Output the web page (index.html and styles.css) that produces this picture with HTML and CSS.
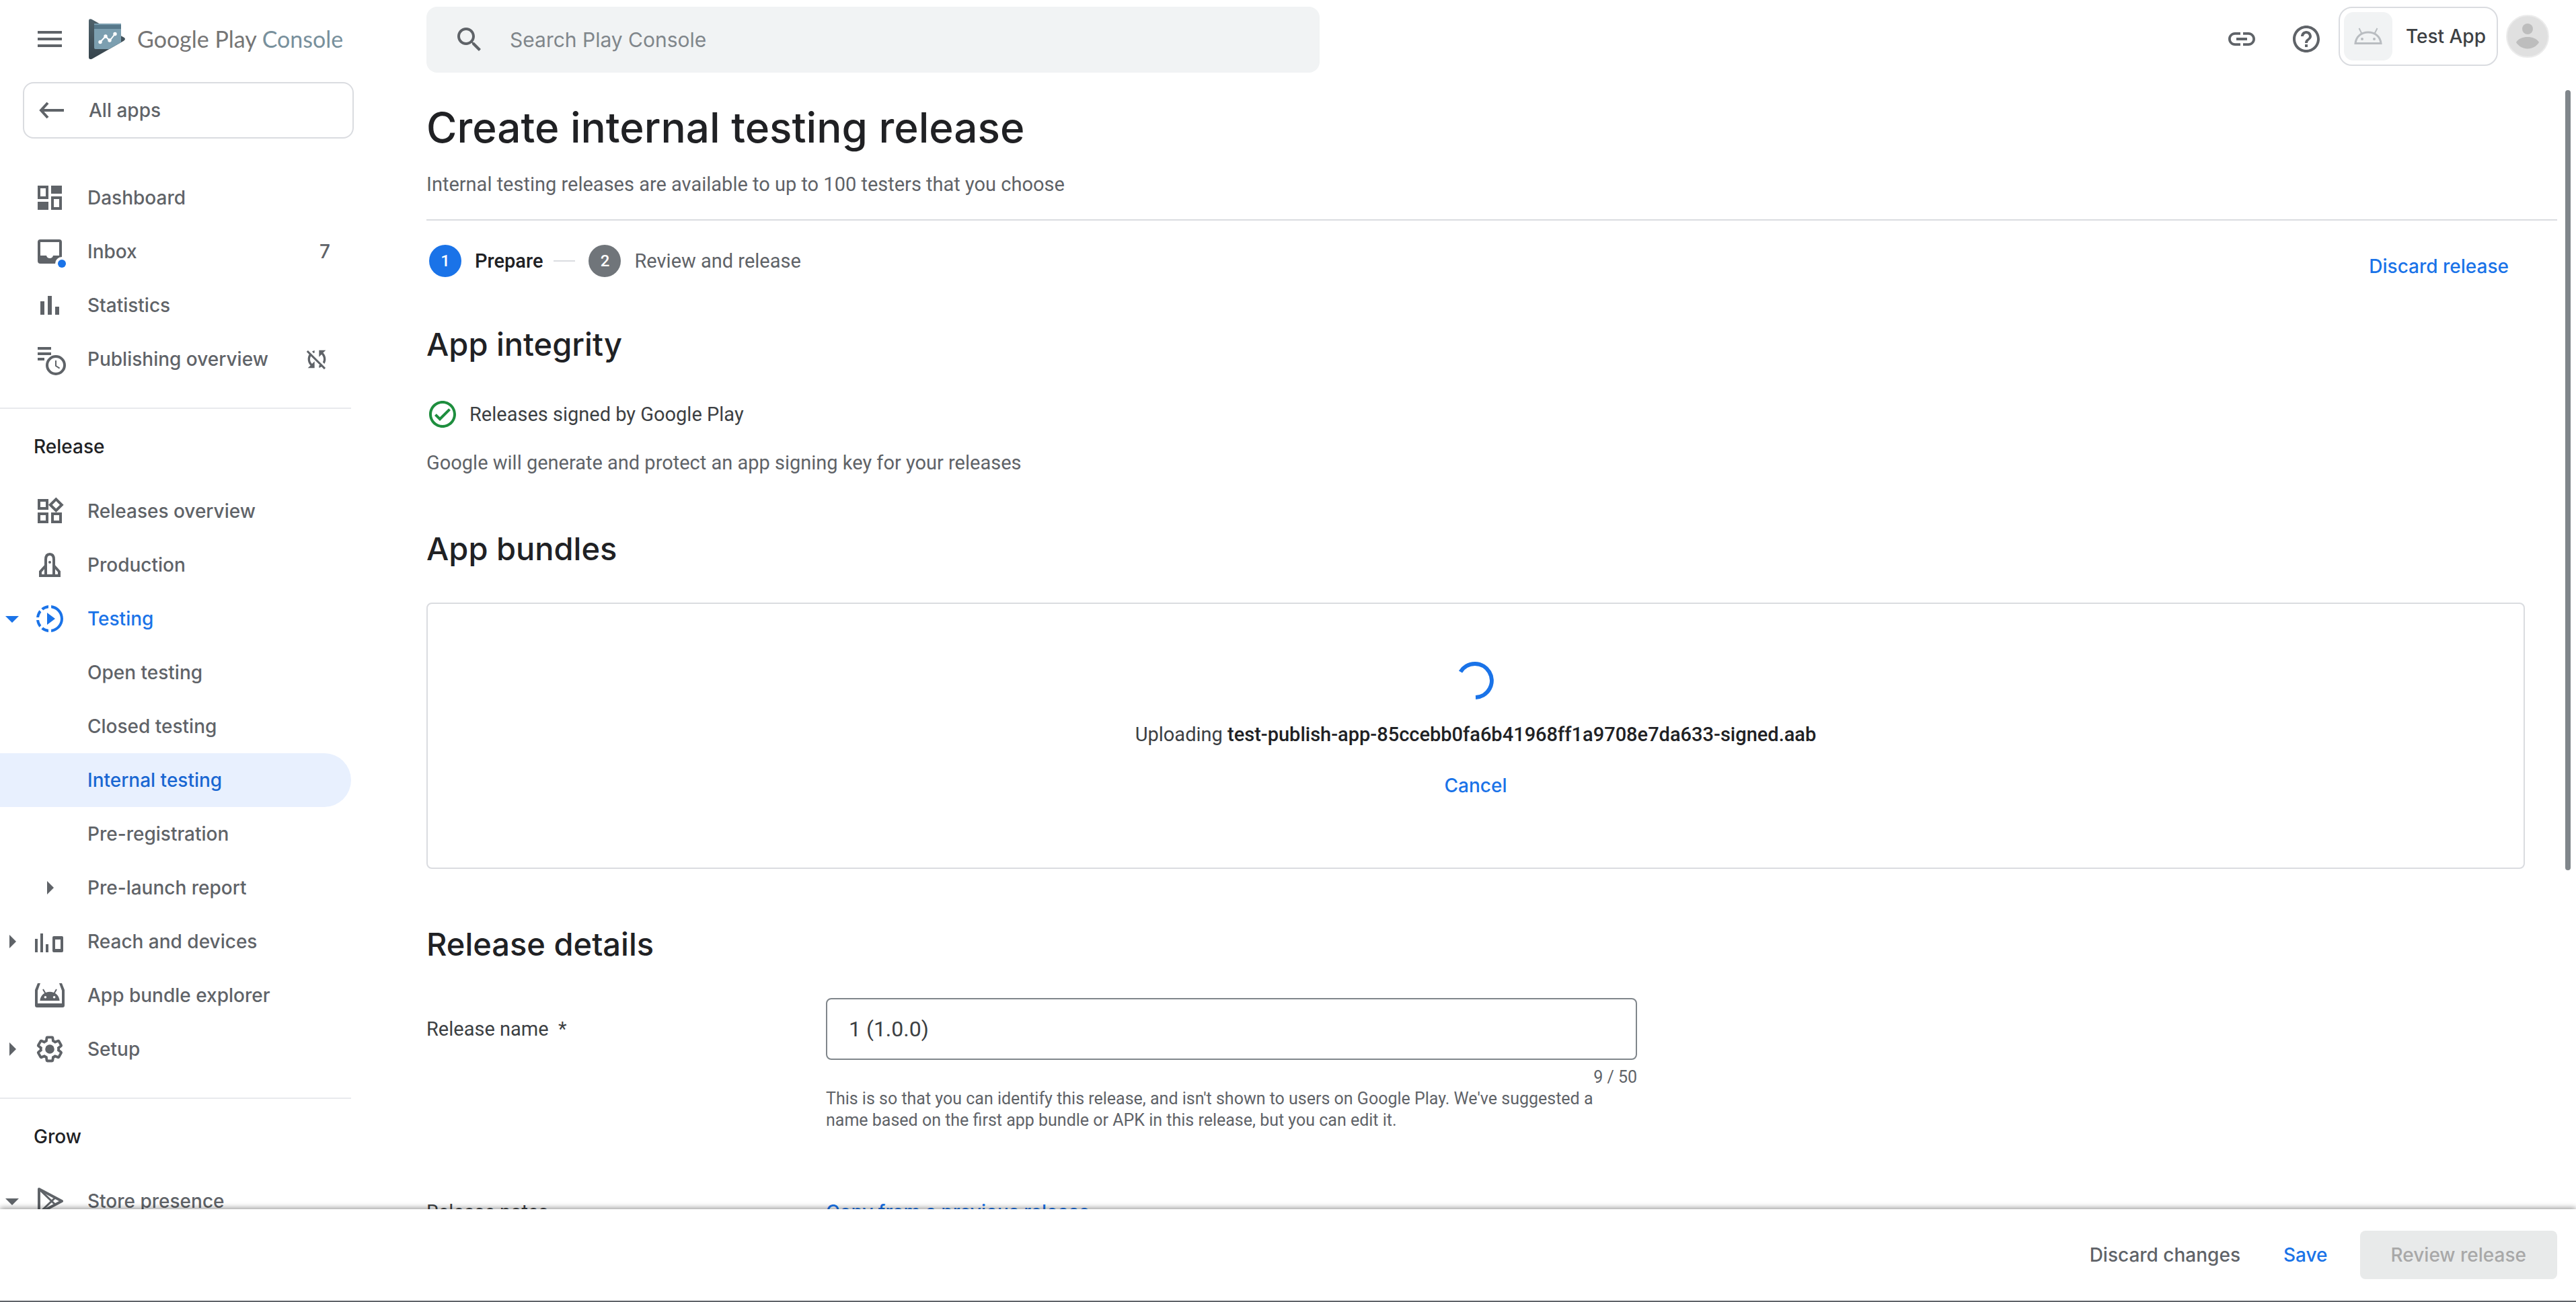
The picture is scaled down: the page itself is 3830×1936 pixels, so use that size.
FILE: index.html
```html
<!DOCTYPE html>
<html lang="en">
<head>
    <meta charset="UTF-8">
    <title>Create internal testing release | Google Play Console</title>
    <link rel="stylesheet" href="styles.css">
</head>
<body>
<header class="topbar">
    <div class="brand">
        <button class="menu-btn" type="button" aria-label="Menu">
            <svg class="icon" viewBox="0 0 24 24"><path d="M3 18h18v-2H3v2zm0-5h18v-2H3v2zm0-7v2h18V6H3z"/></svg>
        </button>
        <a class="logo" href="#">
            <svg class="logo-mark" viewBox="0 0 54 60">
                <defs>
                    <linearGradient id="slate" x1="0" y1="0" x2="0" y2="1">
                        <stop offset="0" stop-color="#4f626b"/>
                        <stop offset="1" stop-color="#36444c"/>
                    </linearGradient>
                </defs>
                <path fill="url(#slate)" d="M0 3Q0 -1 4 .6L52 27.5Q56 30 52 32.7L5 59.4Q0 61.5 0 57z"/>
                <path fill="#7c9fb0" d="M8 7h40v28L30 45H10Q8 45 8 43z"/>
                <path fill="#56788a" d="M8 9h40v6H8z"/>
                <path fill="none" stroke="#fff" stroke-width="2" d="M17 34.5l8-8.5 6 6.5 8-10"/>
                <g fill="#fff">
                    <circle cx="17" cy="34.5" r="2.7"/>
                    <circle cx="25" cy="26" r="2.7"/>
                    <circle cx="31" cy="32" r="2.7"/>
                    <circle cx="39" cy="22.5" r="2.7"/>
                </g>
            </svg>
            <span>Google Play <span class="logo-console">Console</span></span>
        </a>
    </div>
    <label class="search">
        <svg class="icon" viewBox="0 0 24 24"><path d="M15.5 14h-.79l-.28-.27C15.41 12.59 16 11.11 16 9.5 16 5.91 13.09 3 9.5 3S3 5.91 3 9.5 5.91 16 9.5 16c1.61 0 3.09-.59 4.23-1.57l.27.28v.79l5 4.99L20.49 19l-4.99-5zm-6 0C7.01 14 5 11.99 5 9.5S7.01 5 9.5 5 14 7.01 14 9.5 11.99 14 9.5 14z"/></svg>
        <input type="search" placeholder="Search Play Console" aria-label="Search Play Console">
    </label>
    <div class="actions">
        <button class="icon-btn" type="button" aria-label="Copy link">
            <svg class="icon" viewBox="0 0 24 24"><path d="M3.9 12c0-1.71 1.39-3.1 3.1-3.1h4V7H7c-2.76 0-5 2.24-5 5s2.24 5 5 5h4v-1.9H7c-1.71 0-3.1-1.39-3.1-3.1zM8 13h8v-2H8v2zm9-6h-4v1.9h4c1.71 0 3.1 1.39 3.1 3.1s-1.39 3.1-3.1 3.1h-4V17h4c2.76 0 5-2.24 5-5s-2.24-5-5-5z"/></svg>
        </button>
        <button class="icon-btn" type="button" aria-label="Help">
            <svg class="icon" viewBox="0 0 24 24"><path d="M11 18h2v-2h-2v2zm1-16C6.48 2 2 6.48 2 12s4.48 10 10 10 10-4.48 10-10S17.52 2 12 2zm0 18c-4.41 0-8-3.59-8-8s3.59-8 8-8 8 3.59 8 8-3.59 8-8 8zm0-14c-2.21 0-4 1.79-4 4h2c0-1.1.9-2 2-2s2 .9 2 2c0 2-3 1.75-3 5h2c0-2.25 3-2.5 3-5 0-2.21-1.79-4-4-4z"/></svg>
        </button>
        <button class="app-switch" type="button">
            <span class="app-tile">
                <svg viewBox="0 0 42 26">
                    <path fill="none" stroke="#b9bdc1" stroke-width="3" d="M2 23.5C3 13 11 7 21 7s18 6 19 16.5z"/>
                    <path stroke="#b9bdc1" stroke-width="2" d="M11.5 9L7.5 1M30.5 9l4-8"/>
                    <circle cx="12" cy="17" r="2" fill="#b9bdc1"/>
                    <circle cx="30" cy="17" r="2" fill="#b9bdc1"/>
                </svg>
            </span>
            Test App
        </button>
        <a class="avatar" href="#" aria-label="Account">
            <svg viewBox="0 0 64 64">
                <circle cx="32" cy="32" r="31" fill="#e0e0e0" stroke="#ececec" stroke-width="2"/>
                <circle cx="32" cy="21" r="8" fill="#bdbdbd"/>
                <path fill="#bdbdbd" d="M15 41C18 35.5 25 33 32 33s14 2.5 17 8c-4 6-10 9.5-17 9.5S19 47 15 41z"/>
            </svg>
        </a>
    </div>
</header>

<div class="layout">
    <aside class="sidebar">
        <a class="all-apps" href="#">
            <svg class="icon" viewBox="0 0 24 24"><path fill="none" stroke="currentColor" stroke-width="2" d="M21.5 12h-17M9.5 6.500L4.500 12l5 5.500"/></svg>
            All apps
        </a>

        <nav>
            <ul class="nav-group">
                <li><a class="nav-item" href="#">
                    <svg class="icon" viewBox="0 0 24 24"><path fill-rule="evenodd" d="M3 3h8v10H3zM5 5v6h4V5zM13 3h8v6h-8zM3 15h8v6H3zM13 11h8v10h-8zM15 13v6h4v-6z"/></svg>
                    Dashboard
                </a></li>
                <li><a class="nav-item" href="#">
                    <svg class="icon" viewBox="0 0 24 24"><path fill-rule="evenodd" d="M5 3h14q2 0 2 2v14q0 2-2 2H5q-2 0-2-2V5q0-2 2-2zM5 5v10h4.500q.5 2 2.500 2t2.500-2H19V5z"/><circle cx="21" cy="21" r="5" fill="#fff"/><circle cx="21" cy="21" r="3" fill="#1a73e8"/></svg>
                    Inbox
                    <span class="nav-end">7</span>
                </a></li>
                <li><a class="nav-item" href="#">
                    <svg class="icon" viewBox="0 0 24 24"><path d="M5 9h3v10H5zM10.500 5h3v14h-3zM16 13h3v6h-3z"/></svg>
                    Statistics
                </a></li>
                <li><a class="nav-item" href="#">
                    <svg class="icon" viewBox="0 0 24 24"><path d="M3 3h10v2H3zM3 7h10v2H3zM3 11h5v2H3z"/><g fill="none" stroke="currentColor"><circle cx="16.5" cy="16.5" r="6.5" fill="#fff" stroke-width="2"/><path d="M16.5 13v4l2.800 1.800"/></g></svg>
                    Publishing overview
                    <svg class="icon-small nav-end" viewBox="0 0 24 24"><path d="M10 6.35V4.26c-.8.21-1.55.54-2.23.96l1.46 1.46c.25-.12.5-.24.77-.33zm-7.14-.94l2.36 2.36C4.45 8.99 4 10.44 4 12c0 2.21.91 4.2 2.36 5.64L4 20h6v-6l-2.24 2.24C6.68 15.15 6 13.66 6 12c0-1 .25-1.94.68-2.77l8.08 8.08c-.25.13-.5.25-.77.34v2.09c.8-.21 1.55-.54 2.23-.96l2.36 2.36 1.27-1.27L4.14 4.14 2.86 5.41zM20 4h-6v6l2.24-2.24C17.32 8.85 18 10.34 18 12c0 1-.25 1.94-.68 2.77l1.46 1.46C19.55 15.01 20 13.56 20 12c0-2.21-.91-4.2-2.36-5.64L20 4z"/></svg>
                </a></li>
            </ul>

            <h2 class="nav-title">Release</h2>
            <ul class="nav-group">
                <li><a class="nav-item" href="#">
                    <svg class="icon" viewBox="0 0 24 24"><path d="M16.66 4.52l2.83 2.83-2.83 2.83-2.83-2.83 2.83-2.83M9 5v4H5V5h4m10 10v4h-4v-4h4M9 15v4H5v-4h4m7.66-13.31L11 7.34 16.66 13l5.66-5.66-5.66-5.65zM11 3H3v8h8V3zm10 10h-8v8h8v-8zm-10 0H3v8h8v-8z"/></svg>
                    Releases overview
                </a></li>
                <li><a class="nav-item" href="#">
                    <svg class="icon" viewBox="0 0 24 24"><path fill="none" stroke="currentColor" stroke-width="2" d="M9 20V8q0-4 3-4t3 4v12M9 12.500L5 17v3h14v-3l-4-4.500"/><circle cx="12" cy="10" r="1"/></svg>
                    Production
                </a></li>
                <li><a class="nav-item nav-item--open" href="#">
                    <svg class="caret" viewBox="3 3 18 18"><path d="M7 10l5 5 5-5z"/></svg>
                    <svg class="icon" viewBox="0 0 24 24"><path d="M10 7.500v9l6-4.500zM11 4.070V2.050c-2.010.2-3.840 1-5.320 2.210L7.100 5.690c1.110-.86 2.440-1.440 3.900-1.620zM5.690 7.100L4.260 5.680C3.050 7.160 2.250 8.990 2.050 11h2.020c.18-1.460.76-2.790 1.620-3.900zM4.070 13H2.050c.2 2.010 1 3.840 2.210 5.320l1.430-1.430c-.86-1.100-1.440-2.430-1.620-3.890zm1.610 6.740C7.160 20.950 9 21.750 11 21.950v-2.020c-1.460-.18-2.790-.76-3.900-1.620l-1.420 1.430zM22 12c0 5.160-3.920 9.420-8.950 9.950v-2.020C16.970 19.410 20 16.050 20 12s-3.030-7.410-6.950-7.930V2.050C18.080 2.580 22 6.840 22 12z"/></svg>
                    Testing
                </a></li>
                <li><a class="nav-item nav-item--sub" href="#">Open testing</a></li>
                <li><a class="nav-item nav-item--sub" href="#">Closed testing</a></li>
                <li><a class="nav-item nav-item--sub nav-item--active" href="#">Internal testing</a></li>
                <li><a class="nav-item nav-item--sub" href="#">Pre-registration</a></li>
                <li><a class="nav-item" href="#">
                    <svg class="icon" viewBox="0 0 24 24"><path d="M10 7l5 5-5 5z"/></svg>
                    Pre-launch report
                </a></li>
                <li><a class="nav-item" href="#">
                    <svg class="caret" viewBox="3 3 18 18"><path d="M10 7l5 5-5 5z"/></svg>
                    <svg class="icon" viewBox="0 0 24 24"><path fill-rule="evenodd" d="M1 10h2v10H1zM5 6h2v14H5zM9 14h2v6H9zM15 8h6q1 0 1 1v10q0 1-1 1h-6q-1 0-1-1V9q0-1 1-1zM16 10.500v7h4v-7z"/></svg>
                    Reach and devices
                </a></li>
                <li><a class="nav-item" href="#">
                    <svg class="icon" viewBox="0 0 24 24"><path d="M3 3h2L3 8.500V18h18V8.500L19 3h2l2 5v11.500q0 1.500-1.500 1.500h-19Q1 21 1 19.500V8z"/><path d="M4.700 16c.3-4 3.500-6.600 7.300-6.600s7 2.600 7.300 6.600z"/><path fill="none" stroke="currentColor" d="M9 11L7 7.500M15 11l2-3.500"/><g fill="#fff"><circle cx="8.7" cy="13.4" r=".9"/><circle cx="15.3" cy="13.4" r=".9"/></g></svg>
                    App bundle explorer
                </a></li>
                <li><a class="nav-item" href="#">
                    <svg class="caret" viewBox="3 3 18 18"><path d="M10 7l5 5-5 5z"/></svg>
                    <svg class="icon" viewBox="0 0 24 24"><circle cx="12" cy="12" r="3.4"/><path transform="translate(1.4 1.4) scale(.88)" fill="none" stroke="currentColor" stroke-width="2.2" d="M19.43 12.98c.04-.32.07-.64.07-.98 0-.34-.03-.66-.07-.98l2.11-1.65c.19-.15.24-.42.12-.64l-2-3.46c-.09-.16-.26-.25-.44-.25-.06 0-.12.01-.17.03l-2.49 1c-.52-.4-1.08-.73-1.69-.98l-.38-2.65C14.46 2.18 14.25 2 14 2h-4c-.25 0-.46.18-.49.42l-.38 2.65c-.61.25-1.17.59-1.69.98l-2.49-1c-.06-.02-.12-.03-.18-.03-.17 0-.34.09-.43.25l-2 3.46c-.13.22-.07.49.12.64l2.11 1.65c-.04.32-.07.65-.07.98 0 .33.03.66.07.98l-2.11 1.65c-.19.15-.24.42-.12.64l2 3.46c.09.16.26.25.44.25.06 0 .12-.01.17-.03l2.49-1c.52.4 1.08.73 1.69.98l.38 2.65c.03.24.24.42.49.42h4c.25 0 .46-.18.49-.42l.38-2.65c.61-.25 1.17-.59 1.69-.98l2.49 1c.06.02.12.03.18.03.17 0 .34-.09.43-.25l2-3.46c.12-.22.07-.49-.12-.64z"/></svg>
                    Setup
                </a></li>
            </ul>

            <h2 class="nav-title">Grow</h2>
            <ul class="nav-group">
                <li><a class="nav-item" href="#">
                    <svg class="caret" viewBox="3 3 18 18"><path d="M7 10l5 5 5-5z"/></svg>
                    <svg class="icon" viewBox="0 0 24 24"><g fill="none" stroke="currentColor" stroke-linejoin="round"><path stroke-width="2" d="M4 3l17 9-17 9z"/><path stroke-width="1.5" d="M4 3l12 11.500M4 21L16 9.500"/></g></svg>
                    Store presence
                </a></li>
            </ul>
        </nav>
    </aside>

    <main class="content">
        <div class="page-head">
            <h1>Create internal testing release</h1>
            <p class="muted">Internal testing releases are available to up to 100 testers that you choose</p>
        </div>

        <div class="page-body">
            <div class="stepper-row">
                <ol class="stepper">
                    <li class="step step--current"><span class="step-num">1</span>Prepare</li>
                    <li class="step"><span class="step-num">2</span>Review and release</li>
                </ol>
                <button class="btn btn--link" type="button">Discard release</button>
            </div>

            <section class="integrity">
                <h2>App integrity</h2>
                <p class="signed">
                    <svg class="icon icon--ok" viewBox="0 0 24 24"><path d="M16.59 7.58L10 14.17l-2.59-2.58L6 13l4 4 8-8zM12 2C6.48 2 2 6.48 2 12s4.48 10 10 10 10-4.48 10-10S17.52 2 12 2zm0 18c-4.42 0-8-3.58-8-8s3.58-8 8-8 8 3.58 8 8-3.58 8-8 8z"/></svg>
                    Releases signed by Google Play
                </p>
                <p class="muted">Google will generate and protect an app signing key for your releases</p>
            </section>

            <section class="bundles">
                <h2>App bundles</h2>
                <div class="upload-card">
                    <svg class="spinner" viewBox="0 0 56 56"><path fill="none" stroke="#1a73e8" stroke-width="6" d="M5.500 15A25 25 0 1 1 28 53"/></svg>
                    <p>Uploading <strong>test-publish-app-85ccebb0fa6b41968ff1a9708e7da633-signed.aab</strong></p>
                    <button class="btn btn--link" type="button">Cancel</button>
                </div>
            </section>

            <section class="details">
                <h2>Release details</h2>
                <div class="form-row">
                    <label class="form-label" for="release-name">Release name &nbsp;*</label>
                    <div class="form-field">
                        <input id="release-name" type="text" maxlength="50" value="1 (1.0.0)">
                        <p class="counter">9 / 50</p>
                        <p class="hint">This is so that you can identify this release, and isn't shown to users on Google Play. We've suggested a name based on the first app bundle or APK in this release, but you can edit it.</p>
                    </div>
                </div>
                <div class="form-row form-row--notes">
                    <span>Release notes</span>
                    <a class="copy-link" href="#">Copy from a previous release</a>
                </div>
            </section>
        </div>
        <div class="scroll-thumb"></div>
    </main>
</div>

<footer class="footer">
    <button class="btn" type="button">Discard changes</button>
    <button class="btn btn--link" type="button">Save</button>
    <button class="btn btn--primary" type="button" disabled>Review release</button>
</footer>
</body>
</html>
```
FILE: styles.css
```css
* {
    box-sizing: border-box;
}

body {
    display: flex;
    flex-direction: column;
    height: 100vh;
    margin: 0;
    overflow: hidden;
    font: 29px/40px Roboto, sans-serif;
    color: #3c4043;
    background-color: #fff;
}

h1, h2, p, ul, ol {
    margin: 0;
    padding: 0;
}

ul, ol {
    list-style: none;
}

a {
    color: inherit;
    text-decoration: none;
}

button {
    border: none;
    padding: 0;
    background: none;
    color: inherit;
    cursor: pointer;
}

svg {
    display: block;
    flex-shrink: 0;
    fill: currentColor;
    overflow: visible;
}

.icon {
    width: 48px;
    height: 48px;
    color: #5f6368;
}

.icon-small {
    width: 40px;
    height: 40px;
}

.icon--ok {
    color: #1e8e3e;
}

/* top bar */
.topbar {
    display: flex;
    flex-shrink: 0;
    padding: 10px 40px 0 0;
}

.brand {
    display: flex;
    flex: 0 0 634px;
    align-items: center;
    gap: 34px;
    height: 96px;
    padding-left: 50px;
}

.logo {
    display: flex;
    align-items: center;
    gap: 18px;
    font: 34px/44px Lato, sans-serif;
    color: #757575;
}

.logo-mark {
    width: 54px;
    height: 60px;
}

.logo-console {
    color: #78909c;
}

.search {
    display: flex;
    flex: 0 1 1328px;
    align-items: center;
    gap: 36px;
    height: 98px;
    padding: 0 40px;
    border-radius: 16px;
    background-color: #f1f3f4;
}

.search input {
    flex: 1;
    border: none;
    outline: none;
    padding: 0;
    background: none;
    font: 30px/40px Inter, sans-serif;
    color: #3c4043;
}

.search input::placeholder {
    color: #80868b;
    opacity: 1;
}

.actions {
    display: flex;
    align-items: flex-start;
    margin-left: auto;
}

.icon-btn {
    padding: 24px;
}

.app-switch {
    display: flex;
    align-items: center;
    gap: 20px;
    height: 88px;
    padding: 0 16px 0 6px;
    border: 2px solid #dadce0;
    border-radius: 20px;
    font: 500 28px/40px Inter, sans-serif;
}

.app-tile {
    display: flex;
    align-items: center;
    justify-content: center;
    width: 72px;
    height: 72px;
    border-radius: 14px;
    background-color: #f1f3f4;
}

.app-tile svg {
    width: 42px;
    height: 26px;
}

.avatar {
    display: flex;
    align-items: center;
    height: 88px;
    margin-left: 12px;
}

.avatar svg {
    width: 64px;
    height: 64px;
}

.layout {
    display: flex;
    flex: 1;
    min-height: 0;
}

/* side navigation */
.sidebar {
    flex: 0 0 634px;
    overflow: hidden;
    font: 500 28px/40px Inter, sans-serif;
    color: #5f6368;
}

.all-apps {
    display: flex;
    align-items: center;
    gap: 32px;
    width: 492px;
    height: 84px;
    margin: 14px 0 48px 34px;
    padding-left: 16px;
    border: 2px solid #dadce0;
    border-radius: 16px;
}

.nav-group {
    width: 522px;
}

.nav-item {
    position: relative;
    display: flex;
    align-items: center;
    gap: 32px;
    height: 80px;
    padding: 0 31px 0 50px;
}

.nav-item--sub {
    padding-left: 130px;
}

.nav-item--open,
.nav-item--open .icon {
    color: #1a73e8;
}

.nav-item--active {
    border-radius: 0 40px 40px 0;
    background-color: #e8f0fe;
    color: #1967d2;
}

.nav-end {
    margin-left: auto;
}

/* expand arrow lies in the gutter left of the icon */
.caret {
    position: absolute;
    left: 0;
    width: 36px;
    height: 36px;
}

.nav-title {
    width: 522px;
    margin-top: 32px;
    padding: 36px 0 36px 50px;
    border-top: 2px solid #e8eaed;
    font: inherit;
    color: #202124;
}

/* main column */
.content {
    position: relative;
    flex: 1;
    min-width: 0;
    padding-right: 28px;
    overflow: hidden;
}

.page-head {
    padding: 42px 0 32px;
    border-bottom: 2px solid #dadce0;
}

h1 {
    margin-bottom: 24px;
    font: 500 62px/80px Inter, sans-serif;
    color: #202124;
}

.muted {
    color: #5f6368;
}

.page-body {
    padding: 36px 48px 0 0;
}

.page-body h2 {
    margin-bottom: 52px;
    font: 500 47px/56px Inter, sans-serif;
    color: #202124;
}

.stepper-row {
    display: flex;
    align-items: flex-start;
    justify-content: space-between;
}

.stepper {
    display: flex;
    padding-left: 4px;
}

.step {
    display: flex;
    align-items: center;
    gap: 20px;
    color: #5f6368;
}

.step--current {
    font-weight: 500;
    color: #202124;
}

.step--current::after {
    content: '';
    width: 32px;
    height: 2px;
    margin: 0 20px 0 -4px;
    background-color: #dadce0;
}

.step-num {
    width: 48px;
    height: 48px;
    border-radius: 50%;
    background-color: #70757a;
    font: 500 24px/48px Roboto, sans-serif;
    text-align: center;
    color: #fff;
}

.step--current .step-num {
    background-color: #1a73e8;
}

.btn {
    height: 64px;
    padding: 0 24px;
    border-radius: 8px;
    font: 500 28px/40px Inter, sans-serif;
    color: #5f6368;
}

.btn--link {
    color: #1a73e8;
}

.btn--primary {
    height: 72px;
    margin-left: 8px;
    padding: 0 46px;
    background-color: #e8eaea;
    color: #a8a8a8;
}

.integrity {
    margin-top: 56px;
}

.signed {
    display: flex;
    align-items: center;
    gap: 16px;
    margin-bottom: 28px;
}

.bundles {
    margin-top: 80px;
}

.upload-card {
    display: flex;
    flex-direction: column;
    align-items: center;
    padding: 86px 24px 90px;
    border: 2px solid #dadce0;
    border-radius: 8px;
}

.upload-card p {
    margin: 32px 0 24px;
}

.upload-card strong {
    font-weight: 500;
    color: #202124;
}

.spinner {
    width: 56px;
    height: 56px;
}

.details {
    margin-top: 84px;
}

.form-row {
    display: grid;
    grid-template-columns: 594px minmax(0, 1206px);
}

.form-row--notes {
    margin-top: 100px;
}

.form-label {
    line-height: 92px;
}

.form-field input {
    display: block;
    width: 100%;
    height: 92px;
    padding: 0 32px;
    border: 2px solid #80868b;
    border-radius: 8px;
    outline: none;
    font: 32px/48px Roboto, sans-serif;
    color: #3c4043;
}

.counter,
.hint {
    font-size: 25px;
    line-height: 32px;
    color: #5f6368;
}

.counter {
    margin-top: 10px;
    text-align: right;
}

.copy-link {
    font: 500 28px/40px Inter, sans-serif;
    color: #1a73e8;
}

.scroll-thumb {
    position: absolute;
    top: 26px;
    right: 8px;
    width: 8px;
    height: calc(69% - 6px);
    border-radius: 4px;
    background-color: #80868b;
}

/* action bar */
.footer {
    position: relative;
    display: flex;
    flex-shrink: 0;
    align-items: center;
    justify-content: flex-end;
    gap: 16px;
    height: 138px;
    padding-right: 28px;
    border-bottom: 2px solid #5f6368;
    background-color: #fff;
    box-shadow: 0 -2px 8px rgba(0, 0, 0, 0.4);
}
```
